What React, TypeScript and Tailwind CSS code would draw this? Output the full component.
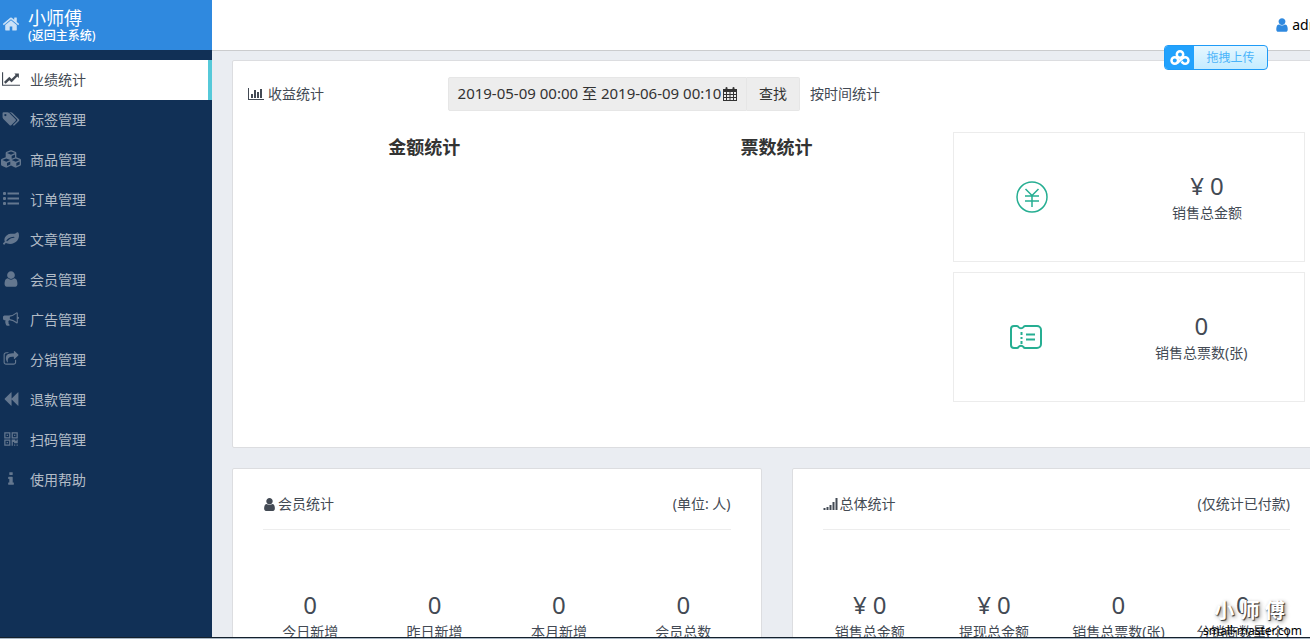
import type { ReactNode } from 'react';
import { FaCubes } from 'react-icons/fa';

type IconProps = { className?: string; children: ReactNode; viewBox?: string };

function Icon({ className = 'h-4 w-4', children, viewBox = '0 0 1792 1792' }: IconProps) {
  return (
    <svg className={`shrink-0 ${className}`} viewBox={viewBox} fill="currentColor" aria-hidden="true">
      {children}
    </svg>
  );
}

const userPath = (
  <path d="M1536 1399q0 109-62.5 187t-150.5 78h-854q-88 0-150.5-78t-62.5-187q0-85 8.5-160.5t31.5-152 58.5-131 94-89 134.5-34.5q131 128 313 128t313-128q76 0 134.5 34.5t94 89 58.5 131 31.5 152 8.5 160.5zm-256-887q0 159-112.5 271.5t-271.5 112.5-271.5-112.5-112.5-271.5 112.5-271.5 271.5-112.5 271.5 112.5 112.5 271.5z" />
);

const menu = [
  {
    label: '业绩统计',
    active: true,
    icon: (
      <Icon className="h-4 w-[18px]" viewBox="0 0 2048 1792">
        <path d="M2048 1536v128h-2048v-1536h128v1408h1920zm-128-1248v435q0 21-19.5 29.5t-35.5-7.5l-121-121-633 633q-10 10-23 10t-23-10l-233-233-416 416-192-192 585-585q10-10 23-10t23 10l233 233 464-464-121-121q-16-16-7.5-35.5t29.5-19.5h435q14 0 23 9t9 23z" />
      </Icon>
    ),
  },
  {
    label: '标签管理',
    icon: (
      <Icon className="h-4 w-[18px]" viewBox="64 0 2048 1792">
        <path d="M576 448q0-53-37.5-90.5t-90.5-37.5-90.5 37.5-37.5 90.5 37.5 90.5 90.5 37.5 90.5-37.5 37.5-90.5zm1067 576q0 53-37 90l-491 492q-39 37-91 37-53 0-90-37l-715-716q-38-37-64.5-101t-26.5-117v-416q0-52 38-90t90-38h416q53 0 117 26.5t102 64.5l715 714q37 39 37 91zm384 0q0 53-37 90l-491 492q-39 37-91 37-36 0-59-14t-53-45l470-470q37-37 37-90 0-52-37-91l-715-714q-38-38-102-64.5t-117-26.5h224q53 0 117 26.5t102 64.5l715 714q37 39 37 91z" />
      </Icon>
    ),
  },
  { label: '商品管理', icon: <FaCubes className="h-5 w-5 shrink-0" /> },
  {
    label: '订单管理',
    icon: (
      <Icon className="h-4 w-4" viewBox="0 0 16 16">
        {[1, 6, 11].map((y) => (
          <g key={y}>
            <rect x="0" y={y} width="3" height="3" rx="1" />
            <rect x="4.5" y={y + 0.5} width="11.5" height="2" />
          </g>
        ))}
      </Icon>
    ),
  },
  {
    label: '文章管理',
    icon: (
      <Icon>
        <path d="M1280 704q0-26-19-45t-45-19q-172 0-318 49.5t-259.5 134-235.5 219.5q-19 21-19 45 0 26 19 45t45 19q24 0 45-19 27-24 74-71t67-66q137-124 268.5-176t313.5-52q26 0 45-19t19-45zm512-198q0 95-20 193-46 224-184.5 383t-357.5 268q-214 108-438 108-148 0-286-47-15-5-88-42t-96-37q-16 0-39.5 32t-45 70-52.5 70-60 32q-43 0-63.5-17.5t-45.5-59.5q-2-4-6-11t-5.5-10-3-9.5-1.5-13.5q0-35 31-73.5t68-65.5 68-56 31-48q0-4-14-38t-16-44q-9-51-9-104 0-115 43.5-220t119-184.5 170.5-139 204-95.5q55-18 145-25.5t179.5-9 178.5-6 163.5-24 113.5-56.5l29.5-29.5 29.5-28 27-20 36.5-16 43.5-4.5q39 0 70.5 46t47.5 112 24 124 8 96z" />
      </Icon>
    ),
  },
  { label: '会员管理', icon: <Icon className="h-[18px] w-[18px]">{userPath}</Icon> },
  {
    label: '广告管理',
    icon: (
      <Icon>
        <path d="M1664 640q53 0 90.5 37.5t37.5 90.5-37.5 90.5-90.5 37.5v384q0 52-38 90t-90 38q-417-347-812-380-58 19-91 66t-31 100.5 40 92.5q-20 33-23 65.5t6 58 33.5 55 48 50 61.5 50.5q-29 58-111.5 83t-168.5 11.5-132-55.5q-7-23-29.5-87.5t-32-94.5-23-89-15-101 3.5-98.5 22-110.5h-122q-66 0-113-47t-47-113v-192q0-66 47-113t113-47h480q435 0 896-384 52 0 90 38t38 90v384zm-128 604v-954q-394 302-768 343v270q377 42 768 341z" />
      </Icon>
    ),
  },
  {
    label: '分销管理',
    icon: (
      <Icon>
        <path d="M1472 989v259q0 119-84.5 203.5t-203.5 84.5h-832q-119 0-203.5-84.5t-84.5-203.5v-832q0-119 84.5-203.5t203.5-84.5h255q13 0 22.5 9.5t9.5 22.5q0 27-26 32-77 26-133 60-10 4-16 4h-112q-66 0-113 47t-47 113v832q0 66 47 113t113 47h832q66 0 113-47t47-113v-214q0-19 18-29 28-13 54-37 16-16 35-8 21 9 21 29zm237-496l-384 384q-18 19-45 19-12 0-25-5-39-17-39-59v-192h-160q-323 0-438 131-119 137-74 473 3 23-20 34-8 2-12 2-16 0-26-13-10-14-21-31t-39.5-68.5-49.5-99.5-38.5-114-17.5-122q0-49 3.5-91t14-90 28-88 47-81.5 68.5-74 94.5-61.5 124.5-48.5 159.5-30.5 196.5-11h160v-192q0-42 39-59 13-5 25-5 26 0 45 19l384 384q19 19 19 45t-19 45z" />
      </Icon>
    ),
  },
  {
    label: '退款管理',
    icon: (
      <Icon>
        <path d="M1683 141q19-19 32-13t13 32v1472q0 26-13 32t-32-13l-710-710q-9-9-13-19v710q0 26-13 32t-32-13l-710-710q-19-19-19-45t19-45l710-710q19-19 32-13t13 32v710q4-10 13-19z" />
      </Icon>
    ),
  },
  {
    label: '扫码管理',
    icon: (
      <Icon className="h-4 w-4" viewBox="-1 -1 13 13">
        <path
          fillRule="evenodd"
          d="M0 0h5v5H0zM1 1v3h3V1zM6 0h5v5H6zM7 1v3h3V1zM0 6h5v5H0zM1 7v3h3V7zM2 2h1v1H2zM8 2h1v1H8zM2 8h1v1H2zM6 6h3v1h1V6h1v3H8V8H7v3H6zM8 10h1v1H8zM10 10h1v1h-1z"
        />
      </Icon>
    ),
  },
  {
    label: '使用帮助',
    icon: (
      <Icon>
        <path d="M1216 1344v128q0 26-19 45t-45 19h-512q-26 0-45-19t-19-45v-128q0-26 19-45t45-19h64v-384h-64q-26 0-45-19t-19-45v-128q0-26 19-45t45-19h384q26 0 45 19t19 45v576h64q26 0 45 19t19 45zm-128-1152v192q0 26-19 45t-45 19h-256q-26 0-45-19t-19-45v-192q0-26 19-45t45-19h256q26 0 45 19t19 45z" />
      </Icon>
    ),
  },
];

function Sidebar() {
  return (
    <aside className="w-[212px] shrink-0 bg-[#113056]">
      <a href="#home" className="flex h-[50px] items-center gap-2 bg-[#2f89df] pl-0.5 text-white">
        <Icon className="mb-0.5 h-[18px] w-[18px] opacity-75">
          <path d="M1472 992v480q0 26-19 45t-45 19h-384v-384h-256v384h-384q-26 0-45-19t-19-45v-480q0-1 .5-3t.5-3l575-474 575 474q1 2 1 6zm223-69l-62 74q-8 9-21 11h-3q-13 0-21-7l-692-577-692 577q-12 8-24 7-13-2-21-11l-62-74q-8-10-7-23.5t11-21.5l719-599q32-26 76-26t76 26l244 204v-195q0-14 9-23t23-9h192q14 0 23 9t9 23v408l219 182q10 8 11 21.5t-7 23.5z" />
        </Icon>
        <span className="flex flex-col pt-0.5">
          <span className="text-lg leading-5">小师傅</span>
          <span className="text-xs font-medium leading-4">(返回主系统)</span>
        </span>
      </a>
      <nav className="pt-2.5">
        {menu.map((item) => (
          <a
            key={item.label}
            href="#menu"
            className={
              item.active
                ? 'flex h-10 items-center gap-[9px] border-r-4 border-[#56c9d9] bg-white pl-px text-sm text-[#434a54]'
                : 'flex h-10 items-center gap-[9px] pl-px text-sm text-[#b3bcc7]'
            }
          >
            <span
              className={
                item.active ? 'flex w-5 justify-center pb-0.5' : 'flex w-5 justify-center pb-0.5 text-[#64778f]'
              }
            >
              {item.icon}
            </span>
            {item.label}
          </a>
        ))}
      </nav>
    </aside>
  );
}

function Stat({ value, label, money }: { value: string; label: string; money?: boolean }) {
  return (
    <div className="flex flex-col items-center">
      <div className="flex items-baseline gap-1.5 text-2xl leading-8">
        {money && <span>¥</span>}
        <span>{value}</span>
      </div>
      <div className="whitespace-nowrap text-sm leading-[22px]">{label}</div>
    </div>
  );
}

function StatCard({
  icon,
  title,
  note,
  stats,
}: {
  icon: ReactNode;
  title: string;
  note: string;
  stats: { value: string; label: string; money?: boolean }[];
}) {
  return (
    <section className="rounded-xs border border-[#dcdde0] bg-white px-[30px] pb-10 pt-5">
      <header className="flex h-[41px] items-center justify-between border-b border-[#ededed] pb-2.5 text-sm">
        <h2 className="flex items-center gap-0.5">
          {icon}
          {title}
        </h2>
        <span>{note}</span>
      </header>
      <div className="-mx-[15px] grid grid-cols-4 pt-[59px]">
        {stats.map((s) => (
          <Stat key={s.label} {...s} />
        ))}
      </div>
    </section>
  );
}

function IncomePanel() {
  return (
    <section className="min-h-[388px] rounded-xs border border-[#dcdde0] bg-white px-[15px] pt-4">
      <div className="flex items-center text-sm">
        <h2 className="flex w-[200px] items-center gap-1">
          <Icon className="h-3.5 w-4" viewBox="0 0 2048 1792">
            <path d="M640 896v512h-256v-512h256zm384-512v1024h-256v-1024h256zm1024 1152v128h-2048v-1536h128v1408h1920zm-640-896v768h-256v-768h256zm384-384v1152h-256v-1152h256z" />
          </Icon>
          收益统计
        </h2>
        <button
          type="button"
          className="flex h-[34px] w-[299px] items-center justify-center gap-0.5 whitespace-nowrap rounded-l-xs border border-[#e6e6e6] bg-[#ededed] text-[15px] text-[#333]"
        >
          2019-05-09 00:00 至 2019-06-09 00:10
          <Icon className="h-3.5 w-3.5" viewBox="0 0 14 14">
            <path
              fillRule="evenodd"
              d="M0 2h14v12H0zM1 5v2h2V5zM4 5v2h2.5V5zM7.500 5v2H10V5zM11 5v2h2V5zM1 8v2h2V8zM4 8v2h2.500V8zM7.500 8v2H10V8zM11 8v2h2V8zM1 11v2h2v-2zM4 11v2h2.500v-2zM7.500 11v2H10v-2zM11 11v2h2v-2z"
            />
            <rect x="2.500" width="2" height="4" rx="1" />
            <rect x="9.500" width="2" height="4" rx="1" />
          </Icon>
        </button>
        <button
          type="button"
          className="h-[34px] w-[53px] rounded-r-xs border border-l-0 border-[#e6e6e6] bg-[#ededed] text-[#333]"
        >
          查找
        </button>
        <span className="pl-2.5">按时间统计</span>
      </div>
      <div className="grid grid-cols-3 pt-[21px]">
        <h3 className="text-center text-lg font-bold leading-[30px] text-[#333]">金额统计</h3>
        <h3 className="text-center text-lg font-bold leading-[30px] text-[#333]">票数统计</h3>
        <div className="flex flex-col gap-2.5">
          <div className="flex h-[130px] items-center justify-around border border-[#ececec]">
            <svg className="h-8 w-8" viewBox="0 0 32 32" fill="none" stroke="#26ae92" strokeWidth="1.500">
              <circle cx="16" cy="16" r="15" />
              <path d="M9.500 8l6.500 6.500L22.500 8M16 14.500V26M9 15h14M9 20h14" />
            </svg>
            <Stat value="0" label="销售总金额" money />
          </div>
          <div className="flex h-[130px] items-center justify-around border border-[#ececec]">
            <svg className="h-8 w-8" viewBox="0 0 32 32" fill="none" stroke="#26ae92" strokeWidth="2" strokeLinejoin="round">
              <path d="M4 5h3q1 0 1.500 1a3 3 0 0 0 5 0q.5-1 1.500-1h12a4 4 0 0 1 4 4v14a4 4 0 0 1-4 4H15q-1 0-1.500-1a3 3 0 0 0-5 0q-.5 1-1.500 1H4q-3 0-3-3V8q0-3 3-3z" />
              <path d="M11.500 11v3M11.500 16v2M11.500 20v3M16 13.500h9M16 18.500h9" />
            </svg>
            <Stat value="0" label="销售总票数(张)" />
          </div>
        </div>
      </div>
    </section>
  );
}

export default function App() {
  return (
    <div className="relative flex h-screen overflow-hidden bg-[#eaedf2] font-['Noto_Sans','Noto_Sans_CJK_SC',sans-serif] text-[#434a54]">
      <Sidebar />
      <div className="flex min-w-0 flex-1 flex-col">
        <header className="flex h-[51px] shrink-0 items-center justify-end border-b border-[#cbccce] bg-white">
          <a href="#account" className="-mr-6 flex items-center gap-0.5 text-sm text-black">
            <Icon className="h-4 w-4 text-[#2f89df]">{userPath}</Icon>
            admin
          </a>
        </header>
        <main className="-mr-[11px] flex flex-col gap-5 pl-5 pt-[9px]">
          <IncomePanel />
          <div className="grid grid-cols-2 gap-[30px]">
            <StatCard
              icon={
                <Icon className="h-[15px] w-[13px]" viewBox="192 0 1408 1792">
                  {userPath}
                </Icon>
              }
              title="会员统计"
              note="(单位: 人)"
              stats={[
                { value: '0', label: '今日新增' },
                { value: '0', label: '昨日新增' },
                { value: '0', label: '本月新增' },
                { value: '0', label: '会员总数' },
              ]}
            />
            <StatCard
              icon={
                <Icon className="h-3.5 w-[15px]" viewBox="0 0 14 14">
                  <path d="M0 11h2v2H0zM3 10h2v3H3zM6 8h2v5H6zM9 5h2v8H9zM12 1h2v12h-2z" />
                </Icon>
              }
              title="总体统计"
              note="(仅统计已付款)"
              stats={[
                { value: '0', label: '销售总金额', money: true },
                { value: '0', label: '提现总金额', money: true },
                { value: '0', label: '销售总票数(张)' },
                { value: '0', label: '分销商数量(个)' },
              ]}
            />
          </div>
        </main>
      </div>

      {/* Drag-to-upload widget */}
      <button
        type="button"
        className="absolute right-[42px] top-[45px] flex h-[25px] w-[104px] overflow-hidden rounded border border-[#1e9bf7] bg-linear-to-b from-[#e6f7ff] to-[#c5ecff] text-xs text-[#4ab4fa]"
      >
        <span className="flex h-full w-[29px] items-center justify-center bg-[#22a2fd]">
          <svg className="h-4 w-5" viewBox="0 0 20 16" fill="none" stroke="white" strokeWidth="2.500" aria-hidden="true">
            <circle cx="10" cy="4.500" r="3.200" />
            <circle cx="4.800" cy="10.500" r="3.300" />
            <path d="M7 13L12.800 8.200a3.300 3.300 0 1 1 0 4.600L11.500 11.500" />
          </svg>
        </span>
        <span className="flex h-full flex-1 items-center justify-center">拖拽上传</span>
      </button>

      {/* Brand mark */}
      <div className="absolute bottom-0 right-2 flex flex-col items-center">
        <span className="pr-1.5 text-xl font-bold leading-6 text-white [text-shadow:1px_1px_1px_#333,2px_2px_4px_#888]">
          小 师 傅
        </span>
        <span className="text-xs leading-4 text-black">small-master.com</span>
      </div>

      <div className="absolute inset-x-0 bottom-0 h-0.5 border-t border-[#14202c] bg-[#a9b7c4]" />
    </div>
  );
}
